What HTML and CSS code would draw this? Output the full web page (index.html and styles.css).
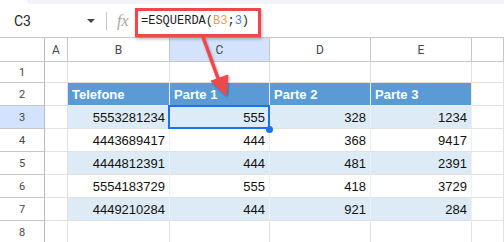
FILE: index.html
```html
<!DOCTYPE html>
<html lang="pt">
<head>
    <meta charset="UTF-8">
    <title>ESQUERDA</title>
    <link rel="stylesheet" href="styles.css">
</head>
<body>
    <div class="top-strip"></div>
    <div class="formula-bar">
        <div class="name-box">C3</div>
        <div class="name-arrow"></div>
        <div class="separator"></div>
        <div class="fx">fx</div>
        <div class="formula">=ESQUERDA(<span class="ref-b3">B3</span>;<span class="ref-num">3</span>)</div>
    </div>

    <div class="sheet">
        <!-- column headers -->
        <div class="col-head corner"></div>
        <div class="col-head">A</div>
        <div class="col-head">B</div>
        <div class="col-head active">C</div>
        <div class="col-head">D</div>
        <div class="col-head">E</div>
        <div class="col-head"></div>

        <!-- row 1 -->
        <div class="row-head">1</div>
        <div class="cell"></div><div class="cell"></div><div class="cell"></div>
        <div class="cell"></div><div class="cell"></div><div class="cell"></div>

        <!-- row 2 -->
        <div class="row-head">2</div>
        <div class="cell"></div>
        <div class="cell title">Telefone</div>
        <div class="cell title">Parte 1</div>
        <div class="cell title">Parte 2</div>
        <div class="cell title">Parte 3</div>
        <div class="cell"></div>

        <!-- row 3 -->
        <div class="row-head active">3</div>
        <div class="cell"></div>
        <div class="cell num band">5553281234</div>
        <div class="cell num band selected">555</div>
        <div class="cell num band">328</div>
        <div class="cell num band">1234</div>
        <div class="cell"></div>

        <!-- row 4 -->
        <div class="row-head">4</div>
        <div class="cell"></div>
        <div class="cell num">4443689417</div>
        <div class="cell num">444</div>
        <div class="cell num">368</div>
        <div class="cell num">9417</div>
        <div class="cell"></div>

        <!-- row 5 -->
        <div class="row-head">5</div>
        <div class="cell"></div>
        <div class="cell num band">4444812391</div>
        <div class="cell num band">444</div>
        <div class="cell num band">481</div>
        <div class="cell num band">2391</div>
        <div class="cell"></div>

        <!-- row 6 -->
        <div class="row-head">6</div>
        <div class="cell"></div>
        <div class="cell num">5554183729</div>
        <div class="cell num">555</div>
        <div class="cell num">418</div>
        <div class="cell num">3729</div>
        <div class="cell"></div>

        <!-- row 7 -->
        <div class="row-head">7</div>
        <div class="cell"></div>
        <div class="cell num band">4449210284</div>
        <div class="cell num band">444</div>
        <div class="cell num band">921</div>
        <div class="cell num band">284</div>
        <div class="cell"></div>

        <!-- row 8 -->
        <div class="row-head">8</div>
        <div class="cell"></div><div class="cell"></div><div class="cell"></div>
        <div class="cell"></div><div class="cell"></div><div class="cell"></div>
    </div>

    <!-- annotation: red box round the formula and arrow to C3 -->
    <div class="callout-box"></div>
    <svg class="callout-arrow" width="60" height="80" viewBox="0 0 60 80">
        <defs>
            <filter id="shadow" x="-50%" y="-50%" width="200%" height="200%">
                <feDropShadow dx="1" dy="1.5" stdDeviation="1.2" flood-color="#000" flood-opacity="0.35"/>
            </filter>
        </defs>
        <g filter="url(#shadow)" fill="#f0474b" stroke="#f0474b">
            <line x1="8" y1="0" x2="24" y2="44" stroke-width="3.5"/>
            <polygon points="16,44 33,38 31,58" stroke-width="1" stroke-linejoin="round"/>
        </g>
    </svg>
</body>
</html>
```

FILE: styles.css
```css
* {
    margin: 0;
    padding: 0;
    box-sizing: border-box;
}

body {
    width: 504px;
    height: 242px;
    overflow: hidden;
    background: white;
    font-family: Roboto, Arial, sans-serif;
    color: #1f1f1f;
    position: relative;
}

.top-strip {
    height: 4px;
    margin-left: 27px;
    background: #f0f4f9;
    border-bottom-left-radius: 6px;
}

.formula-bar {
    height: 34px;
    display: flex;
    align-items: center;
    border-bottom: 1px solid #c4c7c5;
}

.name-box {
    width: 87px;
    padding-left: 14px;
    font-size: 14px;
    color: #1f1f1f;
}

.name-arrow {
    width: 0;
    height: 0;
    border-left: 4px solid transparent;
    border-right: 4px solid transparent;
    border-top: 4px solid #444746;
    margin-right: 11px;
}

.separator {
    width: 1px;
    height: 18px;
    background: #c4c7c5;
    margin-right: 10px;
}

.fx {
    font-family: "Liberation Serif", serif;
    font-style: italic;
    font-size: 16px;
    color: #a6a6a6;
    width: 24px;
}

.formula {
    font-family: "Liberation Mono", monospace;
    font-size: 12px;
    color: #1f1f1f;
}

.ref-b3 {
    color: #e8a33d;
}

.ref-num {
    color: #3f7fe0;
}

.sheet {
    display: grid;
    grid-template-columns: 45px 23px 102px 100px 101px 101px 1fr;
    grid-template-rows: 24px 21px repeat(7, 23px);
}

.col-head {
    display: flex;
    align-items: center;
    justify-content: center;
    font-size: 12px;
    color: #444746;
    border-right: 1px solid #c4c7c5;
    border-bottom: 1px solid #c4c7c5;
}

.col-head.corner {
    border-right: 1px solid #b9bcbb;
}

.col-head.active,
.row-head.active {
    background: #d3e3fd;
}

.row-head {
    display: flex;
    align-items: center;
    justify-content: center;
    font-size: 11px;
    color: #444746;
    border-right: 1px solid #b9bcbb;
    border-bottom: 1px solid #c4c7c5;
}

.cell {
    display: flex;
    align-items: center;
    padding: 1px 4px 0;
    font-family: "Liberation Sans", Arial, sans-serif;
    font-size: 13px;
    color: #111;
    border-right: 1px solid #e1e1e1;
    border-bottom: 1px solid #e1e1e1;
    position: relative;
}

.cell.title {
    background: #5b9bd5;
    color: white;
    font-weight: bold;
    border-right-color: #e6eef8;
    border-bottom-color: #e6eef8;
}

.cell.num {
    justify-content: flex-end;
    border-right-color: #eaf1f9;
}

.cell.band {
    background: #ddebf7;
}

.cell.selected::after {
    content: "";
    position: absolute;
    top: -1px;
    left: -2px;
    right: -1px;
    bottom: -1px;
    border: 2px solid #1a73e8;
}

.cell.selected::before {
    content: "";
    position: absolute;
    right: -4px;
    bottom: -5px;
    width: 7px;
    height: 7px;
    border-radius: 50%;
    background: #1a73e8;
    z-index: 2;
}

.callout-box {
    position: absolute;
    left: 135px;
    top: 8px;
    width: 126px;
    height: 29px;
    border: 3px solid #f0474b;
    box-shadow: 1px 2px 3px rgba(0, 0, 0, 0.3);
}

.callout-arrow {
    position: absolute;
    left: 195px;
    top: 37px;
}
```
